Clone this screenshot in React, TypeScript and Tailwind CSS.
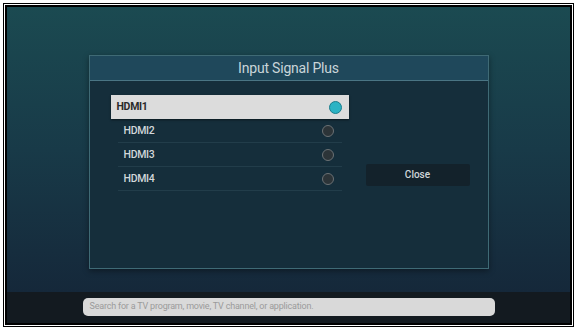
const font = { fontFamily: 'Roboto, "Liberation Sans", sans-serif' }

const inputs = ['HDMI1', 'HDMI2', 'HDMI3', 'HDMI4']

function InputRow({ label, selected }: { label: string; selected: boolean }) {
  if (selected) {
    return (
      <div className="flex h-[24px] w-[238px] items-center justify-between bg-[#dcdcdc] pr-[7px] pl-[6px] shadow-[0_1px_2px_rgba(0,0,0,0.5)]">
        <span className="text-[10.5px] font-bold tracking-[-0.3px] text-[#2a2a2a]">{label}</span>
        <span className="h-[13px] w-[13px] rounded-full border border-[#1a7d8c] bg-[#2cb3c4]" />
      </div>
    )
  }

  return (
    <div className="mx-[7px] flex h-[24px] items-center justify-between border-b border-[#223d4a] pr-[8px] pl-[6px]">
      <span className="text-[10.5px] font-medium tracking-[-0.3px] text-[#d2d7da]">{label}</span>
      <span className="h-[12px] w-[12px] rounded-full border border-[#6b7174] bg-[#2c3438]" />
    </div>
  )
}

export default function App() {
  return (
    <div className="h-[328px] w-[575px] overflow-hidden bg-white" style={font}>
      <div className="mt-[3px] ml-[3px] w-[571px] border border-black p-[1px]">
        <div className="flex h-[320px] flex-col border-2 border-black">
          {/* screen */}
          <div className="flex h-[285px] justify-center bg-gradient-to-b from-[#1b4a51] via-[#183a48] to-[#15283a] pt-[48px]">
            <div className="flex h-[214px] w-[400px] flex-col border border-[#3f6a75] bg-[#152e3b] shadow-[0_2px_6px_rgba(0,0,0,0.4)]">
              <div className="flex h-[25px] items-center justify-center border-b border-[#4a7584] bg-[#1f485b]">
                <span className="text-[14px] tracking-[-0.2px] text-[#c9d5d9]">Input Signal Plus</span>
              </div>
              <div className="flex flex-1 items-center pl-[21px] pr-[18px]">
                <div className="mt-[14px] flex w-[238px] flex-col self-start">
                  {inputs.map((label, i) => (
                    <InputRow key={label} label={label} selected={i === 0} />
                  ))}
                </div>
                <div className="flex-1" />
                <button className="h-[22px] w-[104px] rounded-[2px] bg-[#13222b] text-[10px] font-medium text-[#d0d6d9]">
                  Close
                </button>
              </div>
            </div>
          </div>
          {/* bottom bar */}
          <div className="flex h-[31px] justify-center bg-[#131a20] pt-[6px]">
            <div className="flex h-[18px] w-[412px] items-center rounded-[5px] bg-[#d9d9d9] pl-[7px]">
              <span className="text-[9px] tracking-[-0.2px] text-[#9b9b9b]">
                Search for a TV program, movie, TV channel, or application.
              </span>
            </div>
          </div>
        </div>
      </div>
      <div className="mt-[2px] flex h-[4px] border-t border-black">
        <div className="w-[211px]" />
        <div className="w-[1px] bg-black" />
        <div className="w-[153px]" />
        <div className="w-[1px] bg-black" />
      </div>
    </div>
  )
}
